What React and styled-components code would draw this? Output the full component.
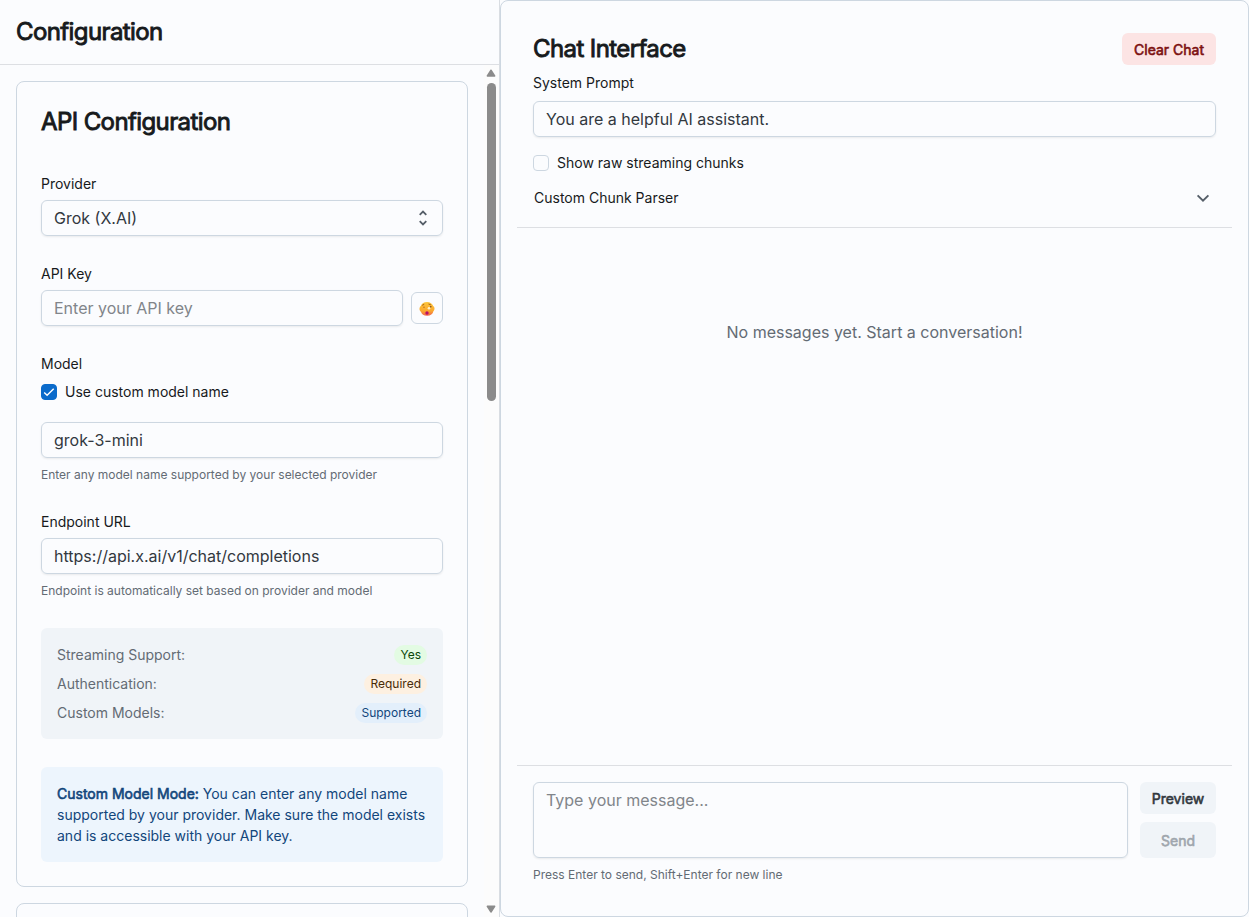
import React from "react";
import styled, { createGlobalStyle, css } from "styled-components";

const GlobalStyle = createGlobalStyle`
  *, *::before, *::after { box-sizing: border-box; }
  body {
    margin: 0;
    background: #fbfcfe;
    color: #32383e;
    font-family: Inter, "Liberation Sans", sans-serif;
    font-size: 16px;
    line-height: 1.5;
  }
`;

/* Emphasis that keeps the advance widths of the regular face. */
const emphasis = css`
  font-weight: 400;
  -webkit-text-stroke: ${(p) => p.$stroke ?? 0.6}px currentColor;
`;

const Page = styled.div`
  display: flex;
  height: 100vh;
  overflow: hidden;
`;

const Sidebar = styled.aside`
  width: 500px;
  flex: none;
  display: flex;
  flex-direction: column;
  border-right: 1px solid #d9dde2;
`;

const SidebarHeader = styled.header`
  flex: none;
  height: 65px;
  padding: 16px;
  border-bottom: 1px solid #dddfe3;
`;

const Heading = styled.h3`
  margin: 0;
  font-size: 24px;
  line-height: 32px;
  letter-spacing: -0.6px;
  color: #171a1c;
  white-space: nowrap;
  font-weight: 400;
  -webkit-text-stroke: 0.9px currentColor;
`;

const ScrollArea = styled.div`
  flex: 1;
  min-height: 0;
  display: flex;
`;

const Cards = styled.div`
  flex: 1;
  padding: 16px;
  display: flex;
  flex-direction: column;
  gap: 16px;
  overflow: hidden;
`;

const Card = styled.section`
  flex: none;
  border: 1px solid #cdd7e1;
  border-radius: 8px;
  padding: 24px;
  min-height: 120px;
`;

const Fields = styled.div`
  display: flex;
  flex-direction: column;
  gap: 28px;
  margin-top: 36px;
`;

const Scrollbar = styled.div`
  width: 15px;
  flex: none;
  display: flex;
  flex-direction: column;
  align-items: center;
  padding: 4px 1px 4px 0;
  background: #fcfcfc;
`;

const Thumb = styled.div`
  width: 9px;
  height: 318px;
  margin-top: 6px;
  margin-bottom: auto;
  border-radius: 5px;
  background: #8b8b8b;
`;

const Field = styled.div`
  display: flex;
  flex-direction: column;
`;

const Label = styled.label`
  font-size: 14px;
  line-height: 20px;
  color: #171a1c;
  margin-bottom: ${(p) => p.$gap ?? 6}px;
`;

const Control = styled.div`
  flex: 1 1 auto;
  min-height: 36px;
  display: flex;
  align-items: center;
  justify-content: space-between;
  border: 1px solid #cdd7e1;
  border-radius: 6px;
  padding: 0 12px;
  line-height: 24px;
  color: ${(p) => (p.$placeholder ? "#81858a" : "#32383e")};
  box-shadow: 0 1px 2px rgba(21, 21, 21, 0.08);
`;

const Helper = styled.div`
  margin-top: 8px;
  font-size: 12px;
  line-height: 18px;
  color: #636b74;
`;

const KeyRow = styled.div`
  display: flex;
  align-items: center;
  gap: 8px;
`;

const IconButton = styled.button`
  width: 32px;
  height: 32px;
  padding: 2px 0 0;
  display: flex;
  align-items: center;
  justify-content: center;
  border: 1px solid #cdd7e1;
  border-radius: 6px;
  background: transparent;
`;

const CheckRow = styled.div`
  display: flex;
  align-items: center;
  gap: 8px;
  height: 20px;
  font-size: 14px;
  line-height: 20px;
  color: #171a1c;
`;

const ModelCheck = styled(CheckRow)`
  margin-bottom: 20px;
`;

const CheckBox = styled.span`
  width: 16px;
  height: 16px;
  display: flex;
  align-items: center;
  justify-content: center;
  border-radius: 4px;
  border: 1px solid ${(p) => (p.$checked ? "#0b6bcb" : "#cdd7e1")};
  background: ${(p) => (p.$checked ? "#0b6bcb" : "#fbfcfe")};
`;

const CheckMark = styled.svg`
  flex: none;
`;

const InfoBox = styled.div`
  display: flex;
  flex-direction: column;
  gap: 8px;
  padding: 16px;
  border-radius: 6px;
  background: #f0f4f8;
`;

const InfoRow = styled.div`
  display: flex;
  align-items: center;
  justify-content: space-between;
  height: 21px;
  font-size: 14px;
  line-height: 21px;
  color: #636b74;
`;

const chipTones = {
  success: { bg: "#e3fbe3", fg: "#0a470a" },
  warning: { bg: "#fdf0e1", fg: "#492b08" },
  primary: { bg: "#e3effb", fg: "#12467b" },
};

const Chip = styled.span`
  height: 20px;
  padding: 0 6px;
  border-radius: 10px;
  font-size: 12px;
  line-height: 20px;
  background: ${(p) => chipTones[p.$tone].bg};
  color: ${(p) => chipTones[p.$tone].fg};
`;

const Notice = styled.div`
  padding: 16px;
  border-radius: 6px;
  background: #edf5fd;
  font-size: 14px;
  line-height: 21px;
  color: #12467b;
`;

const NoticeTitle = styled.strong`
  ${emphasis}
`;

const Chat = styled.main`
  flex: 1;
  min-width: 0;
  display: flex;
  flex-direction: column;
  padding: 16px;
  border: 1px solid #cdd7e1;
  border-radius: 8px;
`;

const ChatHeader = styled.header`
  height: 211px;
  padding: 16px;
  border-bottom: 1px solid #dddfe3;
`;

const TitleRow = styled.div`
  display: flex;
  align-items: center;
  justify-content: space-between;
  margin-bottom: 8px;
`;

const ChatCheck = styled(CheckRow)`
  margin-top: 16px;
`;

const ParserRow = styled.div`
  display: flex;
  align-items: center;
  justify-content: space-between;
  margin-top: 15px;
  padding: 0 4px 0 1px;
  font-size: 14px;
  line-height: 20px;
  color: #171a1c;
`;

const Messages = styled.div`
  flex: 1;
  padding-top: 92px;
  text-align: center;
  line-height: 24px;
  color: #636b74;
`;

const Composer = styled.footer`
  padding: 16px;
  border-top: 1px solid #dddfe3;
`;

const ComposerRow = styled.div`
  display: flex;
  gap: 12px;
`;

const MessageBox = styled(Control)`
  height: 76px;
  align-items: flex-start;
  padding-top: 5px;
`;

const Actions = styled.div`
  width: 76px;
  display: flex;
  flex-direction: column;
  gap: 8px;
`;

const buttonTones = {
  danger: { bg: "#fce4e4", fg: "#7d1212" },
  neutral: { bg: "#f0f4f8", fg: "#32383e" },
  disabled: { bg: "#f0f4f8", fg: "#9fa6ad" },
};

const Button = styled.button`
  height: ${(p) => p.$height ?? 32}px;
  padding: 1px 11px 0;
  border: 0;
  border-radius: 6px;
  font: 400 14px/21px Inter, "Liberation Sans", sans-serif;
  white-space: nowrap;
  background: ${(p) => buttonTones[p.$tone].bg};
  color: ${(p) => buttonTones[p.$tone].fg};
  ${emphasis}
`;

const ClearButton = styled(Button)`
  width: 94px;
`;

function ScrollArrow({ down }) {
  return (
    <svg width="10" height="8" viewBox="0 0 10 8">
      <path
        d={down ? "M1.3 1.300h7.400L5 7z" : "M1.300 7h7.400L5 1.200z"}
        fill="#8b8b8b"
        stroke="#8b8b8b"
        strokeWidth="1.4"
        strokeLinejoin="round"
      />
    </svg>
  );
}

function UnfoldIcon() {
  return (
    <svg width="14" height="20" viewBox="0 0 14 20" fill="none" stroke="#555e68" strokeWidth="1.8">
      <path d="M3.700 6.800 7 3.600l3.300 3.200M3.700 13.200 7 16.400l3.300-3.200" />
    </svg>
  );
}

function PeekFace() {
  return (
    <svg width="16" height="16" viewBox="0 0 16 16">
      <defs>
        <linearGradient id="face" x1="0" y1="0" x2="0" y2="1">
          <stop offset="0" stopColor="#fdc63c" />
          <stop offset="0.65" stopColor="#fba82e" />
          <stop offset="1" stopColor="#f0624f" />
        </linearGradient>
      </defs>
      <path
        d="M8 1c3.200 0 5.400 1.700 6.200 4 .8.600 1.300 1.400 1.300 2.600 0 1.200-.4 2-1.100 2.700-.6 2.900-2.900 4.500-6.200 4.500-3.500 0-5.500-1.400-6.300-4C1 10.200.5 9.200.5 8c0-1.300.5-2.300 1.300-3C2.800 2.600 5 1 8 1z"
        fill="url(#face)"
      />
      <path d="M3.200 4.300 5.200 3.300M9.500 3l2.300.8" stroke="#8a4b16" strokeWidth="0.8" />
      <circle cx="5" cy="6.300" r="0.700" fill="#b56a1d" />
      <circle cx="10" cy="7.300" r="1.300" fill="#fff1cc" />
      <circle cx="11.800" cy="5.800" r="0.800" fill="#6b4420" />
      <circle cx="8" cy="12" r="1.700" fill="#b80f66" />
    </svg>
  );
}

export default function App() {
  return (
    <>
      <GlobalStyle />
      <Page>
        <Sidebar>
          <SidebarHeader>
            <Heading>Configuration</Heading>
          </SidebarHeader>
          <ScrollArea>
            <Cards>
              <Card>
                <Heading>API Configuration</Heading>
                <Fields>
                  <Field>
                    <Label>Provider</Label>
                    <Control>
                      Grok (X.AI)
                      <UnfoldIcon />
                    </Control>
                  </Field>
                  <Field>
                    <Label>API Key</Label>
                    <KeyRow>
                      <Control $placeholder>Enter your API key</Control>
                      <IconButton aria-label="Show key">
                        <PeekFace />
                      </IconButton>
                    </KeyRow>
                  </Field>
                  <Field>
                    <Label $gap={8}>Model</Label>
                    <ModelCheck>
                      <CheckBox $checked>
                        <CheckMark width="14" height="14" viewBox="0 0 14 14">
                          <path d="m2.200 7.400 2.900 2.900 6.600-6.600" fill="none" stroke="#fff" strokeWidth="1.400" />
                        </CheckMark>
                      </CheckBox>
                      Use custom model name
                    </ModelCheck>
                    <Control>grok-3-mini</Control>
                    <Helper>Enter any model name supported by your selected provider</Helper>
                  </Field>
                  <Field>
                    <Label>Endpoint URL</Label>
                    <Control>https://api.x.ai/v1/chat/completions</Control>
                    <Helper>Endpoint is automatically set based on provider and model</Helper>
                  </Field>
                  <InfoBox>
                    <InfoRow>
                      Streaming Support:<Chip $tone="success">Yes</Chip>
                    </InfoRow>
                    <InfoRow>
                      Authentication:<Chip $tone="warning">Required</Chip>
                    </InfoRow>
                    <InfoRow>
                      Custom Models:<Chip $tone="primary">Supported</Chip>
                    </InfoRow>
                  </InfoBox>
                  <Notice>
                    <NoticeTitle>Custom Model Mode:</NoticeTitle> You can enter any model name
                    supported by your provider. Make sure the model exists and is accessible with
                    your API key.
                  </Notice>
                </Fields>
              </Card>
              <Card />
            </Cards>
            <Scrollbar>
              <ScrollArrow />
              <Thumb />
              <ScrollArrow down />
            </Scrollbar>
          </ScrollArea>
        </Sidebar>
        <Chat>
          <ChatHeader>
            <TitleRow>
              <Heading>Chat Interface</Heading>
              <ClearButton $tone="danger">Clear Chat</ClearButton>
            </TitleRow>
            <Field>
              <Label $gap={8}>System Prompt</Label>
              <Control>You are a helpful AI assistant.</Control>
            </Field>
            <ChatCheck>
              <CheckBox />
              Show raw streaming chunks
            </ChatCheck>
            <ParserRow>
              Custom Chunk Parser
              <svg width="18" height="20" viewBox="0 0 18 20" fill="none">
                <path d="m3.600 7.300 5.400 5.400 5.400-5.400" stroke="#555e68" strokeWidth="1.900" />
              </svg>
            </ParserRow>
          </ChatHeader>
          <Messages>No messages yet. Start a conversation!</Messages>
          <Composer>
            <ComposerRow>
              <MessageBox $placeholder>Type your message...</MessageBox>
              <Actions>
                <Button $tone="neutral">Preview</Button>
                <Button $tone="disabled" $height={36} disabled>
                  Send
                </Button>
              </Actions>
            </ComposerRow>
            <Helper>Press Enter to send, Shift+Enter for new line</Helper>
          </Composer>
        </Chat>
      </Page>
    </>
  );
}
